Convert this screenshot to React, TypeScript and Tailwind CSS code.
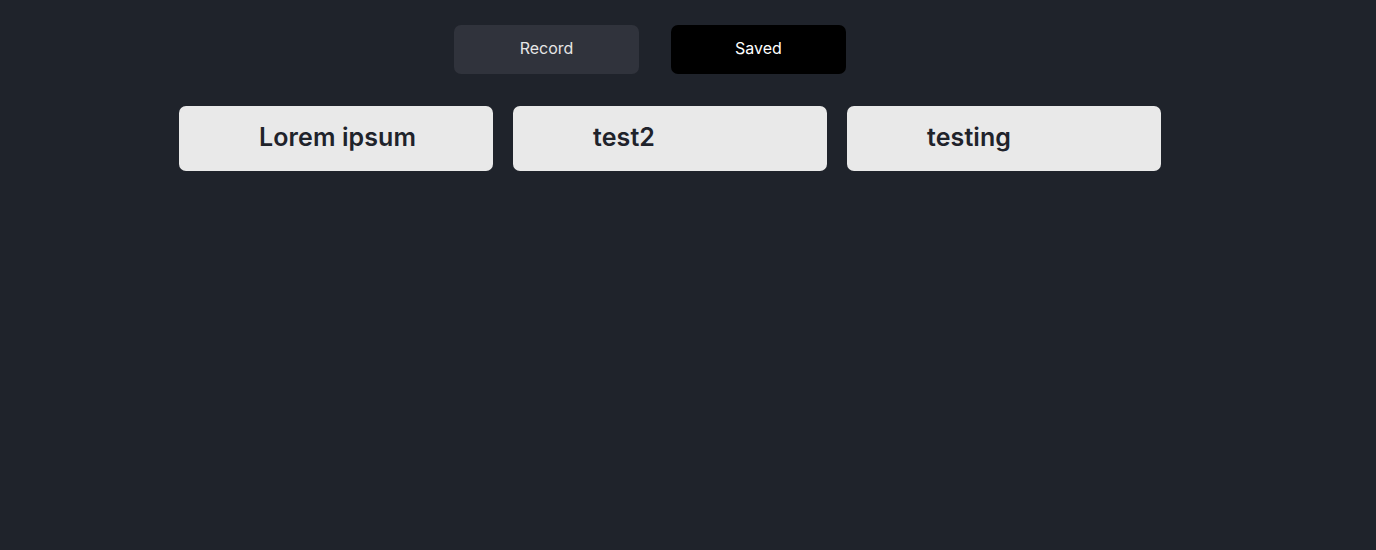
import React from "react";

export default function App() {
  const items = ["Lorem ipsum", "test2", "testing"];
  return (
    <div
      className="w-[1376px] h-[550px] bg-[#1f232b] overflow-hidden"
      style={{ fontFamily: "Inter, 'Noto Sans', sans-serif" }}
    >
      <div className="flex pl-[454px] pt-[25px] gap-[32px]">
        <button className="w-[185px] h-[49px] rounded-[7px] bg-[#30333c] text-[#e6e6e6] text-[16px] pb-[3px]">
          Record
        </button>
        <button className="w-[175px] h-[49px] rounded-[7px] bg-black text-white text-[16px] pb-[3px]">
          Saved
        </button>
      </div>
      <div className="flex pl-[179px] pt-[32px] gap-[20px]">
        {items.map((t) => (
          <div
            key={t}
            className="w-[314px] h-[65px] rounded-[7px] bg-[#e9e9e9] flex items-center pl-[80px] pb-[2px] text-[25px] font-semibold text-[#1f232b] tracking-[0.1px]"
          >
            {t}
          </div>
        ))}
      </div>
    </div>
  );
}
